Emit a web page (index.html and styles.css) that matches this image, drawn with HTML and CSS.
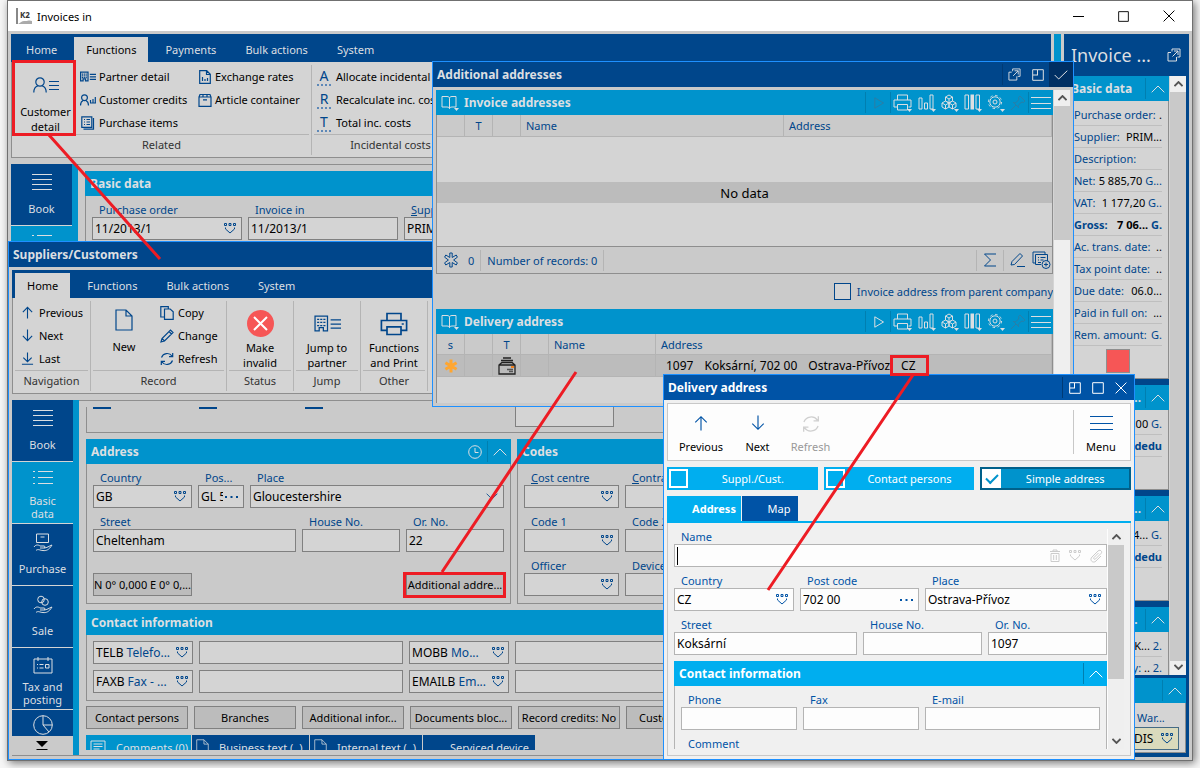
FILE: index.html
```html
<!DOCTYPE html>
<html lang="en">
<head>
<meta charset="utf-8">
<title>Invoices in</title>
<link rel="stylesheet" href="styles.css">
</head>
<body>
<svg class="defs" aria-hidden="true">
  <symbol id="lookup" viewBox="0 0 12 11"><path d="M.5 .5h2v2h-2zM5 .5h2v2H5zM9.500 .5h2v2h-2z"/><path d="M1.500 4.500v1.500L6 10l4.500-4V4.500"/></symbol>
  <symbol id="dots" viewBox="0 0 13 2"><path class="solid" d="M0 0h2v2H0zM5.500 0h2v2h-2zM11 0h2v2h-2z"/></symbol>
  <symbol id="up" viewBox="0 0 14 14"><path d="M7 13.500V1.500M2 6.500l5-5 5 5"/></symbol>
  <symbol id="down" viewBox="0 0 14 14"><path d="M7 .5v12M2 7.500l5 5 5-5"/></symbol>
  <symbol id="last" viewBox="0 0 14 14"><path d="M7 .5v10M2.500 6l4.500 4.500L11.500 6M1 13.200h12"/></symbol>
  <symbol id="refresh" viewBox="0 0 14 14"><path d="M1.500 5.500A6 6 0 0 1 12 4M12.700 1v3.600H9M12.500 8.500A6 6 0 0 1 2 10M1.300 13V9.400H5"/></symbol>
  <symbol id="copy" viewBox="0 0 14 14"><path d="M4 11H.8V.7h7.500V3M4.500 3h5.700l3 2.800v7.500H4.500z"/></symbol>
  <symbol id="pencil" viewBox="0 0 14 14"><path d="M1 13l1-3.500L10.500 1l2.500 2.500L4.500 12zM2 9.500L4.500 12M9 2.500L11.500 5"/></symbol>
  <symbol id="page" viewBox="0 0 18 22"><path d="M1 1h10l6 6v14H1zM11 1v6h6"/></symbol>
  <symbol id="printer" viewBox="0 0 20 17"><path d="M5 6V1h10v5M4.500 13H1V6h18v7h-3.500M5 10.500h10V16H5zM15.500 8.500h1.500"/></symbol>
  <symbol id="customer" viewBox="0 0 26 16"><circle cx="7" cy="5" r="4.200"/><path d="M.8 15.500c0-4 2-6 4-6.500M13.200 15.500c0-4-2-6-4-6.500M16 4.500h10M16 8.500h10M16 12.500h10"/></symbol>
  <symbol id="credits" viewBox="0 0 16 12"><circle cx="4.500" cy="3.700" r="2.900"/><path d="M.5 11.500c0-3 1.500-4.500 2.500-5M8.500 11.500c0-3-1.500-4.500-2.500-5M10 9h6M10.500 8.500V6M13 8.500V5M15.300 8.500V3"/></symbol>
  <symbol id="building" viewBox="0 0 26 16"><path d="M1 1h12v14H9v-3H5v3H1zM16 4.500h10M16 8.500h10M16 12.500h10"/><path stroke-dasharray="2 1" d="M3 4h9M3 7h9M3 10h9"/></symbol>
  <symbol id="items" viewBox="0 0 14 14"><path d="M.8.8h10v10.500h-10zM3 3.500h1M5.500 3.500h3.500M3 6h1M5.500 6h3.500M3 8.500h1M5.500 8.500h3.500M12.500 2v11.200H2.500"/></symbol>
  <symbol id="rates" viewBox="0 0 12 14"><path d="M.7.7h7l3.600 3.500v9.100H.7zM7.500 1v3.500h3.500M3.500 7v4M6 9v2M8.500 8v3"/></symbol>
  <symbol id="box" viewBox="0 0 14 14"><path d="M1 4l1-2.500h10L13 4v9.300H1zM1 4h12M5 1.500V4.500M9 1.500V4.500M5 6.800h4"/></symbol>
  <symbol id="book" viewBox="0 0 18 16"><path d="M1 1.500h5c2 0 2.500 1 2.500 2 0-1 .5-2 2.500-2h4V12h-4c-2 0-2.500 1-2.500 2 0-1-.5-2-2.500-2H1zM8.500 3.500V13"/><path class="solid" d="M13 13h5l-2.500 3z"/></symbol>
  <symbol id="play" viewBox="0 0 10 12"><path d="M.8.8v10.400L9.500 6z"/></symbol>
  <symbol id="tprint" viewBox="0 0 20 18"><path d="M4.500 6V1h10v5M4 13H1V6h17v7h-2.500M4.500 10.500h10V16h-10z"/><path class="solid" d="M14 15h5l-2.500 3z"/></symbol>
  <symbol id="chart" viewBox="0 0 18 18"><path d="M1 4h3v11H1zM6.500 9h3v6h-3zM12 1h3v14h-3z"/><path class="solid" d="M13 15h5l-2.500 3z"/></symbol>
  <symbol id="cubes" viewBox="0 0 18 18"><path d="M8 1l3.500 2v4L8 9 4.500 7V3zM8 9V5L4.500 3M8 5l3.500-2M4.500 7L8 9v4l-3.500 2L1 13V9zM4.500 15v-4L1 9M4.500 11L8 9M11.500 7L15 9v4l-3.500 2L8 13V9zM11.500 15v-4L8 9M11.500 11L15 9"/><path class="solid" d="M13 15h5l-2.500 3z"/></symbol>
  <symbol id="cols" viewBox="0 0 18 18"><path d="M1 1h3.500v14H1zM12 1h3.500v14H12z"/><path class="solid" d="M6.500 .5h3.500v15H6.500zM13 15h5l-2.500 3z"/></symbol>
  <symbol id="gear" viewBox="0 0 18 18"><circle cx="8" cy="8" r="2"/><circle cx="8" cy="8" r="5.200"/><circle cx="8" cy="8" r="6.600" stroke-dasharray="2.500 2.680"/><path class="solid" d="M13 15h5l-2.500 3z"/></symbol>
  <symbol id="pin" viewBox="0 0 16 16"><path d="M1 15l5-5M3 7l6 6M4 8c2 0 3-1 5-4l-.5-1.500L10 1l5 5-1.500 1.500L12 7c-3 2-4 3-4 5"/></symbol>
  <symbol id="popout" viewBox="0 0 14 14"><path d="M4 4.500H1v8.500h8.500V9M5 3.500V1h8v8h-2.500M5.500 8.500L11 3M7 3h4v4"/></symbol>
  <symbol id="dock" viewBox="0 0 12 12"><path d="M.7.7h10.600v10.600H.7zM5.500 1v5M1 6h5"/></symbol>
  <symbol id="max" viewBox="0 0 12 12"><path d="M.7.7h10.600v10.600H.7z"/></symbol>
  <symbol id="close" viewBox="0 0 12 12"><path d="M.6.600l10.800 10.800M11.400.6L.6 11.400"/></symbol>
  <symbol id="check" viewBox="0 0 14 10"><path d="M.7 5l4 4L13.300.7"/></symbol>
  <symbol id="chev" viewBox="0 0 14 8"><path d="M.7 7.300L7 1l6.300 6.300"/></symbol>
  <symbol id="clock" viewBox="0 0 14 14"><circle cx="7" cy="7" r="6.300"/><path d="M7 3v4.500h3.500"/></symbol>
  <symbol id="pie" viewBox="0 0 20 20"><circle cx="10" cy="10" r="9.300"/><path d="M10 .7V10h9.300M10 10l6 7"/></symbol>
  <symbol id="list4" viewBox="0 0 20 18"><path d="M0 1.500h20M0 6.500h20M0 11.500h20M0 16.500h20"/></symbol>
  <symbol id="list3" viewBox="0 0 20 15"><path d="M5 1.500h15M5 7.500h15M5 13.500h15M0 1.500h2M0 7.500h2M0 13.500h2"/></symbol>
  <symbol id="purchase" viewBox="0 0 20 19"><path d="M3.500 1h12v8.500h-12zM7.500 4h4M1 14c2-3 5-2 6-1h4c1.500 0 1 2 0 2H7M11 15c3 0 5-2 8-3-3 5-6 6-9 5.500-3 0-5-2-7 0"/></symbol>
  <symbol id="sale" viewBox="0 0 20 19"><circle cx="8" cy="4.500" r="3.300"/><circle cx="12" cy="7" r="3.300"/><path d="M1 14c2-3 5-2 6-1h4c1.500 0 1 2 0 2H7M11 15c3 0 5-2 8-3-3 5-6 6-9 5.500-3 0-5-2-7 0"/></symbol>
  <symbol id="tax" viewBox="0 0 20 17"><path d="M1 2h18v14H1zM5 0v4M15 0v4M4 7.500h1M6.500 7.500h4M4 11h1M6.500 11h4M12.500 7.500h3.500v3.500h-3.500z"/></symbol>
  <symbol id="star" viewBox="0 0 16 16"><path d="M6.800 1h2.400v4.500l4-2.500 1.200 2.200L10.600 8l3.800 2.800-1.200 2.200-4-2.500V15H6.800v-4.500l-4 2.500-1.200-2.200L5.400 8 1.600 5.200 2.800 3l4 2.500z"/></symbol>
  <symbol id="sigma" viewBox="0 0 14 14"><path d="M13 1H1.500l6 6-6 6H13"/></symbol>
  <symbol id="edit" viewBox="0 0 16 16"><path d="M1 13l1-3.500L10 1.500l2.500 2.500L4.500 12.500zM7 14.500h8"/></symbol>
  <symbol id="listadd" viewBox="0 0 19 18"><path d="M3 12H1V1h12v2M3.500 3.500h12V10M3.500 3.500v10H9M6 6.500h1M8.500 6.500h5M6 9h1M8.500 9h3M6 11.500h3"/><circle cx="14" cy="13.500" r="4"/><path d="M14 11.500v4M12 13.500h4"/></symbol>
  <symbol id="note" viewBox="0 0 16 14"><path d="M1 1h14v12H4l-3-2zM3.500 4h9M3.500 6.500h9M3.500 9h6"/></symbol>
  <symbol id="trash" viewBox="0 0 12 13"><path d="M1 2.500h10M4 2.500V1h4v1.500M2 4.500h8v8H2zM4.700 6v5M7.300 6v5"/></symbol>
  <symbol id="clip" viewBox="0 0 14 14"><path d="M9.500 4L5 8.500c-1 1 .5 2.500 1.500 1.500L12 4.500c2-2-1-4.500-3-2.500L3 8c-3 3 1 7 4 4l5-5"/></symbol>
</svg>

<div class="desktop">

<!-- Main window -->
<section class="win win-main">
  <header class="titlebar">
    <svg class="logo" viewBox="0 0 17 17"><path d="M1 0v16" stroke="#888" stroke-width="2"/><path d="M2 16h14v-3c-3-1.500-5 .5-7 0-3-.5-4 1.500-7 3z" fill="#aaa" stroke="none"/><text x="4" y="10">K2</text></svg>
    <h1>Invoices in</h1>
    <button aria-label="Minimize"><svg width="11" height="11" viewBox="0 0 11 11"><path d="M0 5.500h11"/></svg></button>
    <button aria-label="Maximize"><svg width="11" height="11"><use href="#max"/></svg></button>
    <button aria-label="Close"><svg width="12" height="12"><use href="#close"/></svg></button>
  </header>
  <div class="main-body">
    <div class="main-col">
      <nav class="ribbon-tabs"><button>Home</button><button class="on">Functions</button><button>Payments</button><button>Bulk actions</button><button>System</button></nav>
      <div class="ribbon">
        <div class="group related">
          <div class="group-body">
            <button class="big customer"><svg width="26" height="16"><use href="#customer"/></svg><span>Customer detail</span></button>
            <div class="stack">
              <button><svg class="heavy" width="16" height="11"><use href="#building"/></svg>Partner detail</button>
              <button><svg width="16" height="12"><use href="#credits"/></svg>Customer credits</button>
              <button><svg width="16" height="14"><use href="#items"/></svg>Purchase items</button>
            </div>
            <div class="stack">
              <button><svg width="14" height="14"><use href="#rates"/></svg>Exchange rates</button>
              <button><svg width="14" height="14"><use href="#box"/></svg>Article container</button>
            </div>
          </div>
          <p>Related</p>
        </div>
        <div class="group costs">
          <div class="group-body">
            <div class="stack">
              <button><b class="glyph">A</b>Allocate incidental costs</button>
              <button><b class="glyph">R</b>Recalculate inc. costs</button>
              <button><b class="glyph">T</b>Total inc. costs</button>
            </div>
          </div>
          <p>Incidental costs</p>
        </div>
      </div>
      <div class="work">
        <nav class="side"><button><svg width="20" height="18"><use href="#list4"/></svg><span>Book</span></button><button class="on"><svg width="20" height="15"><use href="#list3"/></svg></button></nav>
        <div class="content">
          <div class="panel">
            <h2 class="bar">Basic data</h2>
            <div class="row">
              <div class="field w150"><label for="po">Purchase order</label><div class="box"><input id="po" value="11/2013/1"><svg class="lk"><use href="#lookup"/></svg></div></div>
              <div class="field w150"><label for="inv">Invoice in</label><div class="box"><input id="inv" value="11/2013/1"></div></div>
              <div class="field w150"><label for="sup"><u>S</u>upplier</label><div class="box"><input id="sup" value="PRIMA"></div></div>
            </div>
          </div>
        </div>
      </div>
    </div>
    <div class="splitter"></div>
    <aside class="preview">
      <header><h2>Invoice ...</h2><svg width="14" height="14"><use href="#popout"/></svg></header>
      <div class="scroller">
        <div class="sections">
          <h3 class="bar">Basic data<i><svg width="14" height="8"><use href="#chev"/></svg></i></h3>
          <div class="facts tall">
            <p><span>Purchase order:</span><b>.</b></p>
            <p><span>Supplier:</span><b>PRIM...</b></p>
            <p><span>Description:</span></p>
            <p><span>Net:</span><b>5 885,70 <em>G...</em></b></p>
            <p><span>VAT:</span><b>1 177,20 <em>G..</em></b></p>
            <p class="strong"><span>Gross:</span><b>7 06... <em>G.</em></b></p>
            <p><span>Ac. trans. date:</span><b>..</b></p>
            <p><span>Tax point date:</span><b>..</b></p>
            <p><span>Due date:</span><b>06.0...</b></p>
            <p><span>Paid in full on:</span><b>...</b></p>
            <p><span>Rem. amount:</span><b><em>G.</em></b></p>
            <div class="flag"></div>
          </div>
          <h3 class="bar end">...<i><svg width="14" height="8"><use href="#chev"/></svg></i></h3>
          <div class="facts"><p><span></span><b>0,00 <em>G.</em></b></p><p class="strong"><span></span><b><em>o dedu</em></b></p></div>
          <h3 class="bar end">...<i><svg width="14" height="8"><use href="#chev"/></svg></i></h3>
          <div class="facts"><p><span></span><b>4... <em>G.</em></b></p><p class="strong"><span></span><b><em>o dedu</em></b></p></div>
          <h3 class="bar end">..<i><svg width="14" height="8"><use href="#chev"/></svg></i></h3>
          <div class="facts short"><p><span></span><b>K... <em>2.</em></b></p><p><span></span><b><em>y:</em> .. <em>2.</em></b></p></div>
        </div>
        <div class="scroll"><svg width="9" height="6"><use href="#chev"/></svg><i class="long"></i><svg class="flip" width="9" height="6"><use href="#chev"/></svg></div>
      </div>
      <div class="bottom">
        <h3 class="bar"><i><svg width="14" height="8"><use href="#chev"/></svg></i></h3>
        <div class="facts ware"><label for="war">War...</label><div class="box"><input id="war" value="DIS"><svg class="lk"><use href="#lookup"/></svg></div></div>
      </div>
    </aside>
  </div>
</section>

<!-- Suppliers / customers window -->
<section class="win win-sup">
  <header class="cap"><h2>Suppliers/Customers</h2></header>
  <div class="sup-body">
    <nav class="ribbon-tabs"><button class="on">Home</button><button>Functions</button><button>Bulk actions</button><button>System</button></nav>
    <div class="ribbon low">
      <div class="group g-nav"><div class="group-body"><div class="stack">
        <button><svg width="13" height="13"><use href="#up"/></svg>Previous</button>
        <button><svg width="13" height="13"><use href="#down"/></svg>Next</button>
        <button><svg width="13" height="13"><use href="#last"/></svg>Last</button>
      </div></div><p>Navigation</p></div>
      <div class="group g-rec"><div class="group-body">
        <button class="big"><svg width="18" height="22"><use href="#page"/></svg><span>New</span></button>
        <div class="stack">
          <button><svg width="14" height="14"><use href="#copy"/></svg>Copy</button>
          <button><svg width="14" height="14"><use href="#pencil"/></svg>Change</button>
          <button><svg width="14" height="14"><use href="#refresh"/></svg>Refresh</button>
        </div></div><p>Record</p></div>
      <div class="group g-one"><div class="group-body"><button class="big"><svg class="stop" width="27" height="27" viewBox="0 0 27 27"><circle cx="13.500" cy="13.500" r="13.500"/><path d="M7 7l13 13M20 7L7 20"/></svg><span>Make invalid</span></button></div><p>Status</p></div>
      <div class="group g-one"><div class="group-body"><button class="big"><svg width="27" height="17"><use href="#building"/></svg><span>Jump to partner</span></button></div><p>Jump</p></div>
      <div class="group g-one"><div class="group-body"><button class="big"><svg width="28" height="24"><use href="#printer"/></svg><span>Functions and Print</span></button></div><p>Other</p></div>
    </div>
    <div class="work">
      <nav class="side">
        <button><svg width="20" height="18"><use href="#list4"/></svg><span>Book</span></button>
        <button class="on"><svg width="20" height="15"><use href="#list3"/></svg><span>Basic<br>data</span></button>
        <button><svg width="20" height="19"><use href="#purchase"/></svg><span>Purchase</span></button>
        <button><svg width="20" height="19"><use href="#sale"/></svg><span>Sale</span></button>
        <button><svg width="20" height="17"><use href="#tax"/></svg><span>Tax and<br>posting</span></button>
        <button class="cut" aria-label="Overview"><svg width="20" height="20"><use href="#pie"/></svg></button>
        <svg class="more" viewBox="0 0 12 9"><path d="M0 0h12L6 6zM.5 8h11v1H.5z"/></svg>
      </nav>
      <div class="content">
        <div class="stub"><i></i><i></i><i></i><b></b></div>
        <div class="pair">
          <div class="panel address">
            <h2 class="bar">Address<svg width="14" height="14"><use href="#clock"/></svg><i><svg width="14" height="8"><use href="#chev"/></svg></i></h2>
            <div class="row">
              <div class="field w99"><label for="c1">Country</label><div class="box"><input id="c1" value="GB"><svg class="lk"><use href="#lookup"/></svg></div></div>
              <div class="field w46"><label for="p1">Pos...</label><div class="box"><input id="p1" value="GL 50"><svg width="13" height="2"><use href="#dots"/></svg></div></div>
              <div class="field grow"><label for="pl1">Place</label><div class="box"><select id="pl1"><option>Gloucestershire</option></select><svg class="flip" width="12" height="7"><use href="#chev"/></svg></div></div>
            </div>
            <div class="row">
              <div class="field grow"><label for="s1">Street</label><div class="box"><input id="s1" value="Cheltenham"></div></div>
              <div class="field w98"><label for="h1">House No.</label><div class="box"><input id="h1"></div></div>
              <div class="field w98"><label for="o1">Or. No.</label><div class="box"><input id="o1" value="22"></div></div>
            </div>
            <div class="row ends"><button class="btn w99 left">N 0° 0,000 E 0° 0,...</button><button class="btn w98">Additional addre...</button></div>
          </div>
          <div class="panel codes">
            <h2 class="bar">Codes</h2>
            <div class="row">
              <div class="field w95"><label for="k1"><u>C</u>ost centre</label><div class="box"><input id="k1"><svg class="lk"><use href="#lookup"/></svg></div></div>
              <div class="field w95"><label for="k2"><u>C</u>ontract</label><div class="box"><input id="k2"></div></div>
            </div>
            <div class="row">
              <div class="field w95"><label for="k3">Code 1</label><div class="box"><input id="k3"><svg class="lk"><use href="#lookup"/></svg></div></div>
              <div class="field w95"><label for="k4">Code 2</label><div class="box"><input id="k4"></div></div>
            </div>
            <div class="row">
              <div class="field w95"><label for="k5">Officer</label><div class="box"><input id="k5"><svg class="lk"><use href="#lookup"/></svg></div></div>
              <div class="field w95"><label for="k6">Device</label><div class="box"><input id="k6"></div></div>
            </div>
          </div>
        </div>
        <div class="panel contacts">
          <h2 class="bar">Contact information</h2>
          <div class="grid">
            <div class="box kind"><span>TELB <em>Telefo...</em></span><svg class="lk"><use href="#lookup"/></svg></div><div class="box"><input aria-label="Telephone"></div>
            <div class="box kind"><span>MOBB <em>Mo...</em></span><svg class="lk"><use href="#lookup"/></svg></div><div class="box"><input aria-label="Mobile"></div>
            <div class="box kind"><span>FAXB <em>Fax - ...</em></span><svg class="lk"><use href="#lookup"/></svg></div><div class="box"><input aria-label="Fax number"></div>
            <div class="box kind"><span>EMAILB <em>Em...</em></span><svg class="lk"><use href="#lookup"/></svg></div><div class="box"><input aria-label="E-mail address"></div>
          </div>
        </div>
        <div class="buttons"><button class="btn">Contact persons</button><button class="btn">Branches</button><button class="btn">Additional infor...</button><button class="btn">Documents bloc...</button><button class="btn">Record credits: No</button><button class="btn">Customer card</button></div>
        <div class="low-tabs"><button class="on"><svg width="16" height="14"><use href="#note"/></svg>Comments (0)</button><button><svg width="13" height="16"><use href="#page"/></svg>Business text (..)</button><button><svg width="13" height="16"><use href="#page"/></svg>Internal text (..)</button><button>Serviced device</button></div>
      </div>
    </div>
  </div>
</section>

<!-- Additional addresses window -->
<section class="win win-add">
  <header class="cap"><h2>Additional addresses</h2><i></i><button aria-label="Pop out"><svg width="13" height="13"><use href="#popout"/></svg></button><button aria-label="Dock"><svg width="12" height="12"><use href="#dock"/></svg></button><button class="ok" aria-label="Confirm"><svg width="14" height="10"><use href="#check"/></svg></button></header>
  <div class="add-body">
    <div class="lists">
      <h3 class="bar tools"><svg width="18" height="16"><use href="#book"/></svg><span>Invoice addresses</span><i></i><svg class="play dim" width="10" height="12"><use href="#play"/></svg><i></i><svg width="20" height="18"><use href="#tprint"/></svg><svg width="18" height="18"><use href="#chart"/></svg><svg width="18" height="18"><use href="#cubes"/></svg><svg width="18" height="18"><use href="#cols"/></svg><svg width="18" height="18"><use href="#gear"/></svg><svg class="dim" width="16" height="16"><use href="#pin"/></svg><i></i><svg width="20" height="14" viewBox="0 0 20 14"><path d="M0 1.500h20M0 7.500h20M0 12.500h20"/></svg></h3>
      <div class="listing">
        <table class="t1"><thead><tr><th></th><th class="mid">T</th><th></th><th>Name</th><th>Address</th></tr></thead></table>
        <div class="empty"><p>No data</p></div>
        <footer><svg width="16" height="16"><use href="#star"/></svg><span>0</span><i></i><span>Number of records: 0</span><i></i><i class="push"></i><svg width="14" height="14"><use href="#sigma"/></svg><i></i><svg width="16" height="16"><use href="#edit"/></svg><svg width="19" height="18"><use href="#listadd"/></svg></footer>
      </div>
      <label class="parent"><input type="checkbox">Invoice address from parent company</label>
      <h3 class="bar tools"><svg width="18" height="16"><use href="#book"/></svg><span>Delivery address</span><i></i><svg class="play" width="10" height="12"><use href="#play"/></svg><i></i><svg width="20" height="18"><use href="#tprint"/></svg><svg width="18" height="18"><use href="#chart"/></svg><svg width="18" height="18"><use href="#cubes"/></svg><svg width="18" height="18"><use href="#cols"/></svg><svg width="18" height="18"><use href="#gear"/></svg><svg class="dim" width="16" height="16"><use href="#pin"/></svg><i></i><svg width="20" height="14" viewBox="0 0 20 14"><path d="M0 1.500h20M0 7.500h20M0 12.500h20"/></svg></h3>
      <div class="listing open">
        <table class="t2"><thead><tr><th class="mid">s</th><th></th><th class="mid">T</th><th></th><th>Name</th><th>Address</th></tr></thead>
        <tbody><tr><td class="mid"><svg class="orange" width="14" height="14" viewBox="0 0 14 14"><path d="M7 .5v13M1.400 3.700l11.200 6.600M12.600 3.700L1.400 10.300"/></svg></td><td></td><td class="mid"><svg class="mail" width="18" height="18" viewBox="0 0 18 18"><path d="M5 1h8M3 3.500h12M1 8l3-2.500h10L17 8v9H1zM1 8h16"/><path d="M9 12.500h6M11 14.500h4" stroke="#555"/><path d="M13 10h3" stroke="#f08020" stroke-width="2"/></svg></td><td></td><td></td><td><div class="addr"><span>1097</span><span>Koksární, 702 00</span><span>Ostrava-Přívoz</span><span>CZ</span></div></td></tr></tbody></table>
      </div>
    </div>
    <div class="scroll"><svg width="9" height="6"><use href="#chev"/></svg><i></i></div>
  </div>
</section>

<!-- Delivery address window -->
<section class="win win-del">
  <header class="cap"><h2>Delivery address</h2><i></i><button aria-label="Dock"><svg width="12" height="12"><use href="#dock"/></svg></button><button aria-label="Maximize"><svg width="12" height="12"><use href="#max"/></svg></button><button aria-label="Close"><svg width="12" height="12"><use href="#close"/></svg></button></header>
  <div class="del-body">
    <div class="toolbar">
      <button><svg width="16" height="16"><use href="#up"/></svg>Previous</button>
      <button><svg width="16" height="16"><use href="#down"/></svg>Next</button>
      <button disabled><svg width="18" height="18"><use href="#refresh"/></svg>Refresh</button>
      <button class="menu"><svg width="23" height="16" viewBox="0 0 23 16"><path d="M0 1.500h23M0 8.500h23M0 14.500h23"/></svg>Menu</button>
    </div>
    <div class="toggles">
      <label><input type="checkbox"><span>Suppl./Cust.</span></label>
      <label><input type="checkbox"><span>Contact persons</span></label>
      <label class="sel"><input type="checkbox" checked><span>Simple address</span></label>
    </div>
    <nav class="tabs"><button class="on">Address</button><button>Map</button></nav>
    <div class="pane">
      <form class="form">
        <div class="field"><label for="dn">Name</label><div class="box"><span class="caret"></span><input id="dn"><svg width="12" height="13"><use href="#trash"/></svg><svg class="lk"><use href="#lookup"/></svg><svg width="14" height="14"><use href="#clip"/></svg></div></div>
        <div class="row">
          <div class="field w120"><label for="dc">Country</label><div class="box"><input id="dc" value="CZ"><svg class="lk"><use href="#lookup"/></svg></div></div>
          <div class="field w119"><label for="dp">Post code</label><div class="box"><input id="dp" value="702 00"><svg width="13" height="2"><use href="#dots"/></svg></div></div>
          <div class="field grow"><label for="dl">Place</label><div class="box"><input id="dl" value="Ostrava-Přívoz"><svg class="lk"><use href="#lookup"/></svg></div></div>
        </div>
        <div class="row">
          <div class="field grow"><label for="ds">Street</label><div class="box"><input id="ds" value="Koksární"></div></div>
          <div class="field w119"><label for="dh">House No.</label><div class="box"><input id="dh"></div></div>
          <div class="field w119"><label for="do">Or. No.</label><div class="box"><input id="do" value="1097"></div></div>
        </div>
        <div class="panel inner">
          <h3 class="bar">Contact information<i><svg width="14" height="8"><use href="#chev"/></svg></i></h3>
          <div class="row">
            <div class="field w116"><label for="dph">Phone</label><div class="box"><input id="dph"></div></div>
            <div class="field w116"><label for="dfx">Fax</label><div class="box"><input id="dfx"></div></div>
            <div class="field grow"><label for="dem">E-mail</label><div class="box"><input id="dem"></div></div>
          </div>
          <div class="field"><label for="dcm">Comment</label><div class="box"><input id="dcm"></div></div>
        </div>
      </form>
      <div class="scroll"><svg width="9" height="6"><use href="#chev"/></svg><i></i><svg class="flip" width="9" height="6"><use href="#chev"/></svg></div>
    </div>
  </div>
</section>

<!-- Callouts drawn over the windows -->
<svg class="callouts" width="1200" height="768" aria-hidden="true">
  <path d="M13.500 61.500h61v73h-61zM49 135L160 259M404.500 573.500h100v23h-100zM442 572L576 372M891.500 356.500h36v18h-36zM913 375L768 590"/>
</svg>
</div>
</body>
</html>
```
FILE: styles.css
```css
* { box-sizing: border-box; }

:root {
  --navy: #00468b;
  --cyan: #0093cc;
  --line: #8e8e8e;
  --soft: #b4b4b4;
  --face: #cacaca;
  --paper: #d4d4d4;
  --ink: #00468b;
  --light: #dcdfe2;
}

body {
  margin: 0;
  font: 11px/15px "Noto Sans", "Open Sans", sans-serif;
  color: #000;
}

h1, h2, h3, p { margin: 0; font: inherit; }
button, input, select { font: inherit; color: inherit; border: 0; padding: 0; margin: 0; background: none; border-radius: 0; }
em, i { font-style: normal; }
svg { fill: none; stroke: currentColor; flex: none; display: block; }
.solid { fill: currentColor; stroke: none; }
.defs { position: absolute; width: 0; height: 0; }

.desktop {
  position: relative;
  height: 100vh;
  min-height: 768px;
  overflow: hidden;
  background: #f6f6f6;
}

.win { position: absolute; display: flex; flex-direction: column; overflow: hidden; background: var(--face); border: 1px solid #1e90ff; }
.win-main { inset: 0 7px 7px; border-color: #707070; box-shadow: 2px 2px 8px #777; }
.win-sup { left: 8px; right: 160px; top: 241px; bottom: 8px; }
.win-add { left: 432px; top: 61px; width: 642px; height: 346px; }
.win-del {
  left: 663px; top: 374px; width: 472px; bottom: 8px;
  --navy: #0053a6; --cyan: #00aeef; --line: #b4b4b4; --soft: #c8c8c8;
  --face: #f0f0f0; --paper: #fdfdfd; --ink: #0053a6; --light: #fff;
}

/* Title bars */
.titlebar { display: flex; align-items: center; height: 30px; background: #fff; padding: 0 1px 0 8px; flex: none; }
.titlebar h1 { flex: 1; padding-left: 4px; }
.titlebar button { width: 45px; height: 28px; display: grid; place-items: center; }
.logo { width: 17px; height: 17px; }
.logo text { font: bold 8px "Noto Sans", sans-serif; fill: #333; stroke: none; }
.cap { display: flex; align-items: center; height: 25px; flex: none; background: var(--navy); color: var(--light); }
.win-del .cap { padding-right: 2px; }
.cap h2 { flex: 1; padding-left: 4px; font-size: 12px; font-weight: bold; line-height: 18px; }
.cap i { width: 1px; height: 21px; background: #003a75; }
.cap button { width: 23px; height: 25px; display: grid; place-items: center; }
.cap .ok { width: 24px; background: #002f63; }

/* Blue section bars */
.bar { display: flex; align-items: center; height: 25px; flex: none; padding-left: 4px; background: var(--cyan); color: var(--light); font-size: 12px; font-weight: bold; }
.bar i { width: 24px; height: 21px; margin-left: auto; border-left: 1px solid #007fb0; display: grid; place-items: center; }
.bar > svg { margin-left: auto; }
.bar > svg + i { margin-left: 5px; }

/* Main window frame */
.main-body { flex: 1; display: flex; gap: 3px; padding: 3px; min-height: 0; }
.main-col { flex: 1; min-width: 0; display: flex; flex-direction: column; }
.splitter { width: 7px; background: var(--cyan); }

.ribbon-tabs { display: flex; gap: 5px; height: 28px; flex: none; padding: 3px 3px 0; background: var(--navy); color: var(--light); }
.ribbon-tabs button { padding: 0 12px; }
.ribbon-tabs .on { background: var(--paper); color: #000; }

.ribbon { display: flex; height: 96px; flex: none; background: var(--paper); border: 1px solid var(--line); border-top: 0; padding-top: 3px; }
.group { display: flex; flex-direction: column; height: 90px; padding: 0 2px; border-right: 1px solid var(--soft); }
.group-body { display: flex; height: 70px; border-bottom: 1px solid var(--soft); }
.group p { text-align: center; color: #333; line-height: 20px; }
.stack { display: flex; flex-direction: column; color: #000; }
.stack button { display: flex; align-items: center; gap: 3px; height: 23px; white-space: nowrap; text-align: left; }
.stack svg, .big svg { color: var(--ink); stroke-width: 1.2; }
.stack .heavy { stroke-width: 2; }
.big { display: flex; flex-direction: column; align-items: center; text-align: center; }
.glyph { width: 14px; height: 18px; margin-right: 2px; font-size: 14px; font-weight: normal; text-align: center; line-height: 16px; color: var(--ink); border-bottom: 2px dotted #5d88b8; }
.related { width: 300px; }
.related .big { width: 63px; padding-top: 12px; }
.related .big span { margin-top: 11px; }
.related .stack { width: 119px; padding-left: 3px; }
.related .stack + .stack { width: auto; padding-left: 2px; }
.costs { width: 158px; }
.costs .stack { padding-left: 3px; }

/* Work area with side navigation */
.work { flex: 1; display: flex; min-height: 0; margin-top: 6px; }
.side { width: 67px; flex: none; display: flex; flex-direction: column; border-right: 6px solid var(--cyan); color: var(--light); overflow: hidden; }
.side button { height: 62px; flex: none; display: flex; flex-direction: column; align-items: center; padding-top: 9px; background: var(--navy); border-bottom: 1px solid var(--paper); line-height: 13px; }
.side .on { background: var(--cyan); padding-top: 8px; }
.side button span { margin: auto 0 10px; }
.side .on span, .side .on ~ button:nth-child(5) span { margin-bottom: 3px; }
.side .cut { height: 26px; padding-top: 5px; border: 0; overflow: hidden; }
.more { width: 12px; height: 9px; margin: 5px auto 0 24px; fill: #000; stroke: none; }
.content { flex: 1; min-width: 0; border-top: 1px solid var(--line); padding: 6px 0 0 7px; display: flex; flex-direction: column; }

/* Fields */
.panel { border: 1px solid var(--line); border-top: 0; padding: 0 6px 6px; background: var(--face); }
.panel > .bar { margin: 0 -7px; padding-left: 5px; }
.row { display: flex; gap: 6px; }
.ends { justify-content: space-between; padding-top: 21px; }
.field { flex: none; min-width: 0; display: flex; flex-direction: column; }
.field.grow { flex: 1; }
.field > label { height: 21px; padding: 7px 0 0 7px; line-height: 14px; color: var(--ink); white-space: nowrap; overflow: hidden; }
.box { position: relative; display: flex; align-items: center; height: 23px; min-width: 0; background: var(--paper); border: 1px solid #808080; overflow: hidden; font-size: 12px; color: var(--ink); }
.win-del .box { border-color: var(--line); }
.box input, .box select { flex: 1; min-width: 0; width: 0; height: 21px; padding: 0 2px; color: #000; outline: 0; appearance: none; }
.box svg { margin-right: 5px; }
.lk { width: 12px; height: 11px; }
.flip { transform: rotate(180deg); }
.w46 { width: 46px; } .w95 { width: 95px; } .w98 { width: 98px; } .w99 { width: 99px; }
.w116 { width: 116px; } .w119 { width: 119px; } .w120 { width: 120px; } .w150 { width: 150px; }
.btn { height: 23px; background: #bcbcbc; border: 1px solid #808080; white-space: nowrap; overflow: hidden; }
.left { text-align: left; }

/* Suppliers window */
.sup-body { flex: 1; display: flex; flex-direction: column; min-height: 0; padding: 3px; }
.g-nav { width: 78px; }
.g-nav .stack { padding-left: 6px; }
.g-nav .stack button { gap: 5px; }
.g-rec { width: 136px; }
.g-rec .big { width: 62px; padding: 8px 0 0; }
.g-rec .big span { margin-top: 8px; }
.g-rec .stack { padding-left: 5px; }
.g-rec .stack button { gap: 4px; }
.g-one { width: 67px; }
.g-one .big { width: 100%; height: 69px; padding-top: 6px; }
.g-one .big svg { margin: auto; }
.big .stop { color: #fff; }
.stop circle { fill: #f65656; stroke: none; }
.stop path { stroke-width: 2; }
.stub { position: relative; height: 26px; flex: none; margin-bottom: 6px; border: 1px solid var(--line); border-top: 0; display: flex; gap: 88px; padding-left: 6px; }
.stub i { width: 18px; height: 2px; background: var(--navy); }
.stub b { position: absolute; left: 428px; top: 0; width: 99px; height: 20px; border: 1px solid #808080; border-top: 0; background: var(--paper); }
.pair { display: flex; gap: 6px; flex: none; }
.address { width: 425px; height: 165px; }
.codes { flex: 1; }
.contacts { margin-top: 6px; height: 91px; flex: none; }
.grid { display: grid; grid-template-columns: 100px 204px 100px 1fr; gap: 6px; padding-top: 6px; }
.kind span { flex: 1; padding-left: 2px; color: #000; white-space: nowrap; overflow: hidden; }
.kind em { color: var(--ink); }
.kind svg { margin: 0 4px 0 0; }
.buttons { display: flex; gap: 6px; margin: 5px 0 6px; flex: none; }
.buttons .btn { width: 102px; flex: none; }
.low-tabs { display: flex; gap: 1px; height: 15px; flex: none; overflow: hidden; color: var(--light); align-items: flex-start; }
.low-tabs button { display: flex; align-items: center; gap: 10px; height: 24px; padding: 0 6px 0 4px; background: var(--navy); white-space: nowrap; width: 112px; }
.low-tabs button:nth-child(1) { width: 105px; background: var(--cyan); }
.low-tabs button:nth-child(2) { width: 117px; }
.low-tabs button:nth-child(4) { padding-left: 27px; }
.sup-body .work { border-bottom: 1px solid var(--line); }

/* Preview column */
.preview { width: 125px; flex: none; display: flex; flex-direction: column; background: var(--navy); padding: 0 0 4px 3px; }
.preview header { display: flex; align-items: center; justify-content: space-between; height: 42px; flex: none; padding: 0 8px 0 4px; color: var(--light); }
.preview header h2 { font-size: 18px; line-height: 24px; white-space: nowrap; }
.scroller { flex: 1; display: flex; min-height: 0; padding-right: 3px; overflow: hidden; }
.sections { flex: 1; min-width: 0; overflow: hidden; }
.sections .end { padding-left: 64px; }
.facts { height: 80px; margin-bottom: 6px; padding: 3px 6px 0 7px; background: var(--paper); border-right: 1px solid var(--line); border-bottom: 1px solid var(--line); color: var(--ink); }
.facts.tall { height: 278px; }
.facts.short { height: 60px; }
.facts p { display: flex; justify-content: space-between; gap: 3px; height: 22px; padding-top: 3px; border-bottom: 1px solid #bfbfbf; white-space: nowrap; overflow: hidden; }
.facts b { font-weight: normal; color: #000; }
.facts em { color: var(--ink); }
.facts .strong, .strong b { font-weight: bold; }
.flag { width: 24px; height: 24px; margin: 3px auto 0; background: #f65656; border: 1px solid var(--line); }
.bottom { padding-top: 3px; }
.bottom .bar { margin-right: 3px; }
.bottom .facts { margin: 0 3px 0 0; }
.facts.ware { height: 50px; display: flex; flex-direction: column; align-items: flex-end; }
.ware label { width: 42px; padding-top: 3px; line-height: 18px; }
.ware .box { width: 78px; background: #dadabc; border-color: #456b85; }
.ware input { padding-left: 32px; }

/* Scroll bars */
.scroll { width: 17px; flex: none; display: flex; flex-direction: column; align-items: center; background: #efefef; border-left: 1px solid var(--paper); color: #555; }
.scroll svg { margin: 5px 0; stroke-width: 3; }
.scroll i { width: 100%; height: 134px; background: #c9c9c9; }
.scroll .flip { margin-top: auto; }
.scroll .long { height: auto; flex: 1; margin-bottom: 3px; }

/* Additional addresses */
.add-body { flex: 1; display: flex; padding: 3px; min-height: 0; }
.lists { flex: 1; min-width: 0; display: flex; flex-direction: column; }
.tools { padding: 0 2px 0 5px; gap: 5px; }
.tools > svg { margin: 0; }
.tools span { flex: 1; }
.tools i, .tools > svg + i { width: 1px; margin: 0 -3px; }
.tools .play { margin: 0 4px 0 6px; }
.dim { color: #2a7ea6; }
.listing { display: flex; flex-direction: column; background: var(--paper); border: 1px solid var(--line); border-top: 0; }
table { width: 100%; border-collapse: separate; border-spacing: 0; table-layout: fixed; background: var(--face); }
th, td { height: 22px; padding: 0 0 0 5px; text-align: left; font-weight: normal; border-right: 1px solid var(--soft); border-bottom: 1px solid var(--soft); color: var(--ink); }
th:nth-child(-n+3) { width: 28px; }
.t2 th { height: 21px; }
.t2 th:nth-child(4) { width: 28px; }
.t1 th:nth-child(4) { width: 263px; }
.t2 th:nth-child(5) { width: 107px; }
th.mid, td.mid { padding: 0; text-align: center; }
.mid svg { margin: auto; }
td { background: #bcbcbc; }
.addr { display: flex; gap: 11px; padding-left: 5px; font-size: 12px; color: #000; white-space: nowrap; }
.orange { color: #ffa630; stroke-width: 3; }
.mail { color: #222; stroke-width: 1.3; }
.empty { height: 109px; padding-top: 45px; }
.empty p { height: 21px; background: #bcbcbc; text-align: center; font-size: 13px; line-height: 22px; }
footer { display: flex; align-items: center; gap: 6px; height: 27px; padding: 0 1px 0 6px; background: var(--face); border-top: 1px solid var(--line); color: var(--ink); }
footer i { width: 1px; height: 21px; background: var(--soft); }
footer .push { margin-left: auto; }
footer span:first-of-type { padding-left: 3px; }
.parent { display: flex; align-items: center; justify-content: flex-end; gap: 6px; height: 35px; color: var(--ink); white-space: nowrap; }
.parent input { appearance: none; width: 17px; height: 17px; border: 1px solid var(--ink); background: var(--paper); }
.open { flex: 1; border-bottom: 0; }

/* Delivery address */
.del-body { flex: 1; display: flex; flex-direction: column; padding: 3px; min-height: 0; }
.toolbar { display: flex; height: 58px; flex: none; background: var(--paper); border: 1px solid var(--soft); padding: 6px 2px 6px 3px; }
.toolbar button { display: flex; flex-direction: column; align-items: center; justify-content: space-between; width: 60px; height: 44px; padding-top: 5px; }
.toolbar button:nth-child(2), .toolbar button:nth-child(3) { width: 53px; }
.toolbar svg { color: var(--ink); }
.toolbar button:disabled, .toolbar :disabled svg { color: #999; }
.toolbar :disabled svg { opacity: .45; }
.toolbar .menu { margin-left: auto; width: 55px; border-left: 1px solid var(--soft); }
.toggles { display: grid; grid-template-columns: repeat(3, 1fr); gap: 6px; margin-top: 6px; flex: none; }
.toggles label { display: flex; align-items: center; height: 23px; padding-left: 2px; background: var(--cyan); color: #fff; text-align: center; }
.toggles span { flex: 1; }
.toggles input { appearance: none; width: 19px; height: 19px; border: 2px solid #fff; }
.toggles .sel { background: #0093cc; border: 2px solid #00608a; padding: 0; }
.toggles :checked { background: #fff; display: grid; place-items: center; }
.toggles :checked::before { content: ""; width: 10px; height: 5px; border: solid #0093cc; border-width: 0 0 2px 2px; transform: rotate(-45deg); margin-top: -3px; }
.tabs { display: flex; gap: 1px; margin-top: 6px; height: 27px; flex: none; border-bottom: 2px solid var(--cyan); }
.tabs button { height: 25px; width: 56px; padding-left: 18px; background: var(--navy); color: #fff; }
.tabs .on { width: 74px; padding-left: 20px; background: var(--cyan); font-weight: bold; }
.pane { flex: 1; display: flex; min-height: 0; border: 1px solid var(--soft); border-top: 0; padding: 6px; overflow: hidden; }
.form { flex: 1; min-width: 0; overflow: hidden; }
.form > .field label { height: 15px; padding-top: 1px; }
.inner { margin-top: 6px; }
#dn ~ svg { color: #ccc; margin-right: 8px; }
#dn ~ svg:last-child { margin-right: 3px; }
.caret { width: 1px; height: 18px; margin-left: 2px; background: #000; }

.callouts { position: absolute; left: 0; top: 0; color: #ed1c24; stroke-width: 3; pointer-events: none; }
```
